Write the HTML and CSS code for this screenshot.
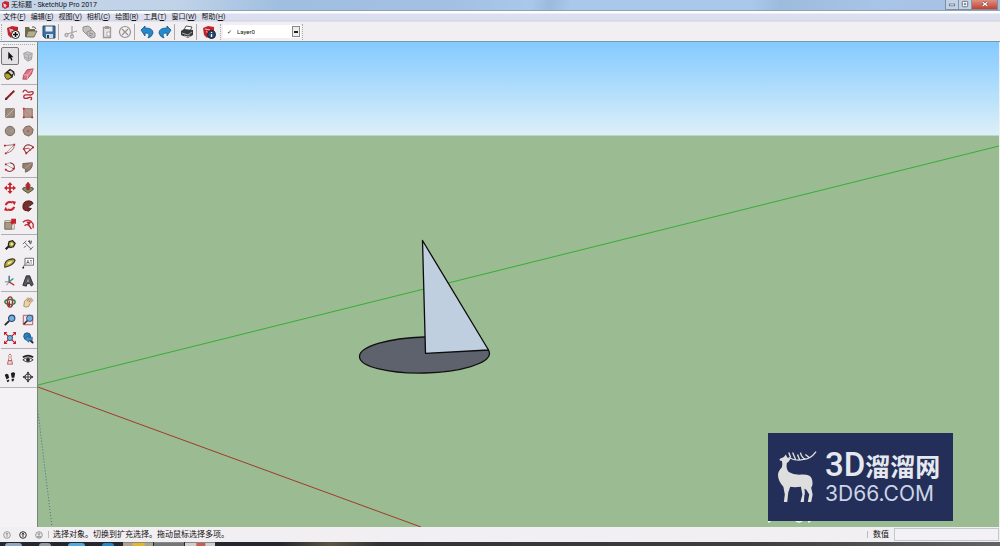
FILE: index.html
```html
<!DOCTYPE html>
<html lang="zh-CN">
<head>
<meta charset="utf-8">
<title>无标题 - SketchUp Pro 2017</title>
<link rel="stylesheet" href="styles.css">
</head>
<body>
<header class="titlebar">
  <svg class="app-icon" viewBox="0 0 8 8"><path d="M1 2 4 0l4 1v5L4 8 1 6z" fill="#c9252f"/><path d="M2 3l3 1v1L3 4.500v1L5 6" fill="none" stroke="#fff" stroke-width=".8"/></svg>
  <h1 class="title">无标题 - SketchUp Pro 2017</h1>
  <div class="window-buttons">
    <button class="win" aria-label="最小化"><svg viewBox="0 0 13 10"><rect x="3.500" y="4.500" width="6" height="2" fill="#fff" stroke="#56657c" stroke-width=".8"/></svg></button>
    <button class="win" aria-label="还原"><svg viewBox="0 0 13 10"><rect x="3.500" y="1.500" width="6" height="6" rx="1" fill="#fff" stroke="#56657c"/><path d="M5 4.500h3M6.500 3v3" stroke="#56657c"/></svg></button>
    <button class="win close" aria-label="关闭"><svg viewBox="0 0 13 10"><path d="M4 2.500l5 4M9 2.500l-5 4" stroke="#7d2c25" stroke-width="2.600"/><path d="M4 2.500l5 4M9 2.500l-5 4" stroke="#fff" stroke-width="1.500"/></svg></button>
  </div>
</header>

<nav class="menubar">
  <button>文件(<u>F</u>)</button><button>编辑(<u>E</u>)</button><button>视图(<u>V</u>)</button><button>相机(<u>C</u>)</button><button>绘图(<u>R</u>)</button><button>工具(<u>T</u>)</button><button>窗口(<u>W</u>)</button><button>帮助(<u>H</u>)</button>
</nav>

<div class="toolbar">
  <span class="grip"></span>
  <button class="tool" aria-label="新建"><svg viewBox="0 0 14 14"><path d="M1 3l5-2 6 1v3L5 13 2 10z" fill="#c6202c"/><path d="M3 4l4 1v1L4 5.500v1L7 8" stroke="#f5c9c9" fill="none"/><circle cx="9.500" cy="9.500" r="4" fill="#fff" stroke="#222"/><path d="M7 9.500h5M9.500 7v5" stroke="#111" stroke-width="1.500"/></svg></button>
  <button class="tool" aria-label="打开"><svg viewBox="0 0 14 14"><path d="M1 2h4l1 2h5v3H4l-2 5H1z" fill="#706a4e"/><path d="M4 6h9l-3 6H2z" fill="#b3ae8e" stroke="#5e5a42" stroke-width=".8"/><path d="M8 2q3-1 4 2" stroke="#555" fill="none"/></svg></button>
  <button class="tool" aria-label="保存"><svg viewBox="0 0 14 14"><path d="M1 1h12v12H3l-2-2z" fill="#3a6f9f" stroke="#2a4c6c"/><rect x="3.500" y="1.500" width="7" height="5" fill="#e9eff5"/><rect x="4" y="9" width="7" height="4" fill="#cdd6df"/><rect x="5" y="10" width="2" height="3" fill="#27425c"/></svg></button>
  <span class="sep"></span>
  <button class="tool" aria-label="剪切"><svg viewBox="0 0 14 14" fill="none" stroke="#a9a5a5" stroke-width="1.300"><path d="M8 1v9M13 6l-10 3"/><circle cx="2.500" cy="10" r="1.500"/><circle cx="8" cy="11.500" r="1.500"/></svg></button>
  <button class="tool" aria-label="复制"><svg viewBox="0 0 14 14" fill="#c3bfbf" stroke="#928e8e"><path d="M1 2l5-1 3 2v5l-5 1-3-3z"/><path d="M5 7l5-2 3 3v4l-4 1-4-3z"/><path d="M7 8l4 1M7 10l3 1" /></svg></button>
  <button class="tool" aria-label="粘贴"><svg viewBox="0 0 14 14"><path d="M3.500 2.500h7v10h-7z" fill="#e9e5e5" stroke="#9d9999" stroke-width="1.300"/><path d="M5 1h4v3H5z" fill="#9d9999"/><path d="M7 7h3v4H7z" fill="#fff" stroke="#aaa"/></svg></button>
  <button class="tool" aria-label="删除"><svg viewBox="0 0 14 14" fill="none" stroke="#959191" stroke-width="1.200"><circle cx="7" cy="7" r="5.500"/><path d="M4 4l6 6M10 4l-6 6"/></svg></button>
  <span class="sep"></span>
  <button class="tool" aria-label="撤销"><svg viewBox="0 0 14 14"><path d="M1 5l4-4v2q8 0 8 5-1 4-5 5 3-5-3-5v3z" fill="#2489cf" stroke="#15547f" stroke-width=".8"/></svg></button>
  <button class="tool" aria-label="重做"><svg viewBox="0 0 14 14"><path d="M13 5L9 1v2Q1 3 1 8q1 4 5 5-3-5 3-5v3z" fill="#2489cf" stroke="#15547f" stroke-width=".8"/></svg></button>
  <span class="sep"></span>
  <button class="tool" aria-label="打印"><svg viewBox="0 0 14 14"><path d="M4 5l2-4 6 1-2 4z" fill="#fff" stroke="#555"/><path d="M1 6l3-2 9 1v5l-5 3-7-3z" fill="#35393b"/><path d="M2 8l6 2 4-3" stroke="#a9adaf" fill="none"/><path d="M4 11l4 1 2-1" stroke="#ddd"/></svg></button>
  <span class="sep"></span>
  <button class="tool" aria-label="模型信息"><svg viewBox="0 0 14 14"><path d="M1 3l5-2 6 1v4L5 13 2 10z" fill="#c6202c"/><path d="M3 4l5 1M4 6.500l2 1" stroke="#f5c9c9"/><circle cx="9.500" cy="9.500" r="4" fill="#244b78" stroke="#222"/><path d="M9.500 9v3M9.500 7v1" stroke="#fff" stroke-width="1.300"/></svg></button>
  <span class="grip wide"></span>
  <label class="layer"><span class="check">✓</span><select class="layer-select" aria-label="图层"><option>Layer0</option></select><span class="arrow"></span></label>
  <span class="grip end"></span>
</div>

<main class="workspace">
  <aside class="palette">
    <div class="tools-panel">
    <span class="palette-grip"></span>
    <div class="group">
      <button class="tool active" aria-label="选择"><svg viewBox="0 0 14 14"><path d="M5 2v9l2-2 1.500 3.500 1.500-.7L8.500 8.500H11z" fill="#111"/></svg></button>
      <button class="tool" aria-label="制作组件"><svg viewBox="0 0 14 14"><path d="M2 4l4-2 6 2-1 7-4 2-4-3z" fill="#c9c8c8" stroke="#9b9a9a"/><path d="M2 4l6 2 4-2M8 6l-1 7M3 8l5 2 4-2" fill="none" stroke="#a3a2a2"/></svg></button>
      <button class="tool" aria-label="材质"><svg viewBox="0 0 14 14"><path d="M2 5l5-4 5 3 1 6-2-3-1 4-5 2-4-4z" fill="#25241c"/><path d="M1 6l4 0 4 4-3 3H3l-2-3z" fill="#b5a32b" stroke="#33301a"/><path d="M5 4l3-1 3 3-2 2z" fill="#d8d6c2"/></svg></button>
      <button class="tool" aria-label="擦除"><svg viewBox="0 0 14 14"><path d="M6 2l7-1-2 6-5 6H1l1-5z" fill="#dc7382" stroke="#a64856"/><path d="M2 8h5l5-6M7 8l-1 5" stroke="#f4b7bf" fill="none"/></svg></button>
    </div>
    <div class="group">
      <button class="tool" aria-label="直线"><svg viewBox="0 0 14 14"><path d="M2 12L12 2" stroke="#8d1e24" stroke-width="2.200"/><path d="M1 13l1-3 2 2z" fill="#222"/></svg></button>
      <button class="tool" aria-label="手绘线"><svg viewBox="0 0 14 14"><path d="M1 4C2 0 5 1 6 3s4 0 6 0 1 4-2 4-8-1-8 2 4 2 6 1 5 0 2 3" fill="none" stroke="#b32b38" stroke-width="1.500"/></svg></button>
      <button class="tool" aria-label="矩形"><svg viewBox="0 0 14 14"><path d="M2 2h10v10H2z" fill="#9c8c7e" stroke="#716257"/><path d="M2 12L12 2" stroke="#d7b6ad"/></svg></button>
      <button class="tool" aria-label="旋转矩形"><svg viewBox="0 0 14 14"><path d="M2 2h10v10H2z" fill="#b59a8d" stroke="#85685d"/><path d="M2 2v10M2 3l9 9" stroke="#c37b78"/><path d="M1 1h2v2H1zM1 11h2v2H1zM11 11h2v2h-2z" fill="#c0262d"/></svg></button>
      <button class="tool" aria-label="圆"><svg viewBox="0 0 14 14"><circle cx="7" cy="7" r="5.500" fill="#9b9081" stroke="#6e6255"/><path d="M7 7h4" stroke="#c5a398"/></svg></button>
      <button class="tool" aria-label="多边形"><svg viewBox="0 0 14 14"><path d="M4 2l5-1 4 4-1 5-4 3-5-2-2-5z" fill="#a38e82" stroke="#775f54"/><path d="M7 7l4-3" stroke="#c3796f"/><circle cx="7" cy="7" r="1" fill="#b33"/></svg></button>
      <button class="tool" aria-label="圆弧"><svg viewBox="0 0 14 14" fill="none"><path d="M1 3l11-1Q12 10 2 12" stroke="#a5555a"/><path d="M2 12L12 2" stroke="#999"/><path d="M0 2h2v2H0zM11 1h2v2h-2zM1 11h2v2H1z" fill="#bd222c"/></svg></button>
      <button class="tool" aria-label="两点圆弧"><svg viewBox="0 0 14 14" fill="none"><path d="M2 7q1-5 6-5 4 1 5 3L5 12z" stroke="#86343a" stroke-width="1.200"/><path d="M2 7l6-1 2 3" stroke="#b33"/><path d="M1 6h2v2H1zM4 11h2v2H4zM12 4h2v2h-2z" fill="#bd222c"/></svg></button>
      <button class="tool" aria-label="三点圆弧"><svg viewBox="0 0 14 14" fill="none"><path d="M7 2q6 1 5 7-5 6-10 1" stroke="#8e3137" stroke-width="1.200"/><path d="M2 4l9 5M2 4l5-2" stroke="#999"/><path d="M1 3h2v2H1zM10 8h2v2h-2zM1 9h2v2H1z" fill="#bd222c"/></svg></button>
      <button class="tool" aria-label="扇形"><svg viewBox="0 0 14 14"><path d="M1 3l11-1q1 8-8 11V9L1 8z" fill="#93806f" stroke="#6d594e"/><path d="M3 9l9-7" stroke="#c5a398"/></svg></button>
    </div>
    <div class="group">
      <button class="tool" aria-label="移动"><svg viewBox="0 0 14 14" fill="#c7222b"><path d="M7 0l3 3.500H8V6h2.500V4L14 7l-3.500 3V8H8v2.500h2L7 14l-3-3.500h2V8H3.500v2L0 7l3.500-3v2H6V3.500H4z"/></svg></button>
      <button class="tool" aria-label="推拉"><svg viewBox="0 0 14 14"><path d="M1 7l6-2 6 2v2l-6 4-6-4z" fill="#8d8a68" stroke="#51462f"/><path d="M7 0l3 4H8.500v5h-3V4H4z" fill="#bf222a" stroke="#781619" stroke-width=".5"/></svg></button>
      <button class="tool" aria-label="旋转"><svg viewBox="0 0 14 14"><path d="M2 6q2-5 8-3M12 8q-2 5-8 3" fill="none" stroke="#c7222b" stroke-width="2.300"/><path d="M9 1l5 1-2 4zM5 13l-5-1 2-4z" fill="#c7222b"/></svg></button>
      <button class="tool" aria-label="路径跟随"><svg viewBox="0 0 14 14"><path d="M1 8q0-7 7-7 4 0 5 3L9 7Q7 6 7 9l4 1-3 3-5-1q-2-1-2-4z" fill="#8b2228" stroke="#3c1b18"/><path d="M5 10Q4 5 12 4" fill="none" stroke="#55483a" stroke-width="1.500"/></svg></button>
      <button class="tool" aria-label="缩放"><svg viewBox="0 0 14 14"><path d="M1 3h11v10H1z" fill="#eee" stroke="#9a9187"/><path d="M1 5h8v8H1z" fill="#a69b89" stroke="#73695a"/><path d="M8 1h6v6l-2-1-2 2-3-3 2-2z" fill="#c7222b"/></svg></button>
      <button class="tool" aria-label="偏移"><svg viewBox="0 0 14 14"><path d="M1 5q7-6 12 2v5M3 9q4-4 8 4" fill="none" stroke="#bd222c" stroke-width="1.500"/><path d="M5 4l6 0-3 5z" fill="#bd222c"/></svg></button>
    </div>
    <div class="group">
      <button class="tool" aria-label="卷尺"><svg viewBox="0 0 14 14"><path d="M2 12l5-5" stroke="#222" stroke-width="2.500"/><path d="M6 3l4-1 3 3-2 4-4 1-2-3z" fill="#b8ab36" stroke="#26241a" stroke-width="1.400"/><circle cx="9" cy="6" r="1.300" fill="#eee"/></svg></button>
      <button class="tool" aria-label="尺寸"><svg viewBox="0 0 14 14" fill="none" stroke="#555"><path d="M3 4l8 8M1 6l4-4M9 13l4-4M2 10l3-2"/><path d="M7 3l2-1v3M11 2l-1 4" stroke="#222"/></svg></button>
      <button class="tool" aria-label="量角器"><svg viewBox="0 0 14 14"><path d="M1 12Q0 5 6 3q6-2 7 1-2 6-12 8z" fill="#b7a739" stroke="#343018" stroke-width="1.200"/><path d="M4 9q0-4 6-4-2 3-6 4z" fill="#f0edda"/></svg></button>
      <button class="tool" aria-label="文字"><svg viewBox="0 0 14 14"><path d="M3.500 1.500h10v8h-10zM3 9l-2 4" fill="#fff" stroke="#555"/><text x="5" y="8" class="glyph">A1</text><circle cx="1.500" cy="12.500" r="1" fill="#222"/></svg></button>
      <button class="tool" aria-label="轴"><svg viewBox="0 0 14 14" fill="none" stroke-width="1.500"><path d="M6 8V1" stroke="#285f9c"/><path d="M6 8l5-4" stroke="#38915c"/><path d="M6 8l6 4" stroke="#b52e34"/><path d="M6 8H1M6 8l-3 4" stroke="#68717a" stroke-width="1"/></svg></button>
      <button class="tool" aria-label="三维文字"><svg viewBox="0 0 14 14"><path d="M5 1h4l4 10-2 2-2-3H6l-1 3-4-1z" fill="#56575a" stroke="#232426"/><path d="M7 4l1 4H6z" fill="#c3c4c7"/></svg></button>
    </div>
    <div class="group">
      <button class="tool" aria-label="环绕观察"><svg viewBox="0 0 14 14" fill="none"><ellipse cx="7" cy="7" rx="3" ry="6" stroke="#a6282d" stroke-width="1.700"/><ellipse cx="7" cy="7" rx="6" ry="3" stroke="#347645" stroke-width="1.700"/><path d="M5 13V8l2-3v7" fill="#a6282d"/></svg></button>
      <button class="tool" aria-label="平移"><svg viewBox="0 0 14 14"><path d="M2 12l1-6 4-4 1 1-2 3 4-4 1 1-3 4 4-3 1 1-4 4-1 3-3 1z" fill="#eed2a5" stroke="#907552" stroke-width=".8"/></svg></button>
      <button class="tool" aria-label="缩放视图"><svg viewBox="0 0 14 14"><path d="M1 13l5-5" stroke="#292929" stroke-width="2.200"/><circle cx="9" cy="5" r="3.700" fill="#75aee0" stroke="#294768" stroke-width="1.300"/></svg></button>
      <button class="tool" aria-label="缩放窗口"><svg viewBox="0 0 14 14"><path d="M1.500 1.500h11v11h-11z" fill="#f3e3e5" stroke="#b8404a"/><path d="M2 12l5-5" stroke="#292929" stroke-width="1.800"/><circle cx="9" cy="5" r="3.700" fill="#75aee0" stroke="#294768"/></svg></button>
      <button class="tool" aria-label="充满视窗"><svg viewBox="0 0 14 14"><path d="M1 1l12 12M13 1L1 13" stroke="#bd222c" stroke-width="1.500"/><path d="M0 0h4L0 4zM14 0v4l-4-4zM0 14v-4l4 4zM14 14h-4l4-4z" fill="#bd222c"/><circle cx="7" cy="7" r="3" fill="#75aee0" stroke="#294768"/></svg></button>
      <button class="tool" aria-label="上一视图"><svg viewBox="0 0 14 14"><path d="M8 8l5 5" stroke="#292929" stroke-width="2.200"/><circle cx="6" cy="5" r="4" fill="#3380bf" stroke="#1f4d77"/><path d="M3 8l5-4v2h4v4H8v2z" fill="#3b8dd0" stroke="#1f4d77" stroke-width=".7"/></svg></button>
    </div>
    <div class="group">
      <button class="tool" aria-label="定位相机"><svg viewBox="0 0 14 14"><path d="M7 1l1.500 2L8 5l1 4H5l1-4-.5-2z" fill="#fff" stroke="#9c4c50" stroke-width=".8"/><path d="M4 13l1-4h4l1 4z" fill="#f0d8d9" stroke="#a63137" stroke-width=".8"/></svg></button>
      <button class="tool" aria-label="绕轴旋转"><svg viewBox="0 0 14 14"><path d="M1 5q6-4 12 0" fill="none" stroke="#222" stroke-width="2"/><path d="M1 8q6-5 12 0-6 5-12 0z" fill="#eee" stroke="#222"/><circle cx="7" cy="8" r="2.200" fill="#222"/></svg></button>
      <button class="tool" aria-label="漫游"><svg viewBox="0 0 14 14" fill="#1d1d1f"><path d="M1 5q1-3 4-1l1 4-3 2zM3 11l3-1 0 2-2 1zM8 3q3-3 5 0L12 8H9zM9 9h3l-1 3H9z"/></svg></button>
      <button class="tool" aria-label="剖切面"><svg viewBox="0 0 14 14" fill="none" stroke="#26272a"><circle cx="7" cy="7" r="3.500"/><path d="M7 1v12M1 7h12"/><path d="M5 3h4L7 1zM5 11h4l-2 2zM3 5v4L1 7zM11 5v4l2-2z" fill="#26272a" stroke="none"/></svg></button>
    </div>
    </div>
  </aside>
  <section class="viewport">
    <svg class="scene" viewBox="38 42 961 485" preserveAspectRatio="xMinYMin slice">
      <defs><linearGradient id="sky" x1="0" y1="0" x2="0" y2="1"><stop offset="0" stop-color="#83caff"/><stop offset="1" stop-color="#def0f8"/></linearGradient></defs>
      <rect x="38" y="42" width="961" height="94" fill="url(#sky)"/>
      <rect x="38" y="135.500" width="961" height="392" fill="#9bbb92"/>
      <path d="M38 385L999 146" stroke="#35ae34"/>
      <path d="M38 387L421 527" stroke="#a13a29"/>
      <path d="M35 387L52 527" stroke="#4a6a91" stroke-dasharray="1 2"/>
      <ellipse cx="424.500" cy="355" rx="65" ry="18" transform="rotate(-1.500 424.500 355)" fill="#5d626c" stroke="#111" stroke-width="1.300"/>
      <path d="M422.500 240.500L488.500 350 425.500 353.300z" fill="#c0cfdf" stroke="#0c0c0c" stroke-width="1.300" stroke-linejoin="round"/>
      <path d="M768 522q2 0 3-2M796 521q3 2 6 0M808 522q2 0 3-2" fill="none" stroke="#fff" stroke-width="1.500"/>
    </svg>
    <div class="brand">
      <svg class="deer" viewBox="0 0 42 54"><path d="M1.500 8.500L6 6.500 8 4l1.500 3L13 8l-2 3-2 2q-1 6 2 9 5 3 13 2.500 9-.5 10.500 4Q36.500 34 34 38l1.500 7L34 52.500h-3.500L32 45l-3-5-2-1q1 5 0 7l-.5 6.500H23L25 45l-1.500-8Q17 38 12.500 37L10.500 43 9.500 52.500H6L7 45 5.500 37Q0 31 0 25q0-4 4-8 1-3 0-6.500L2 10z" fill="#dededf"/><path d="M11 7q7 4 15 2 7 0 13-8M13 7l-2-5M18 9l-3-7M22 9L20 4M28 9q-4-2-5-7M32 7l-4-3" fill="none" stroke="#dededf" stroke-width="1.400"/></svg>
      <div class="brand-text"><div class="brand-name"><span class="brand-3d">3D</span>溜溜网</div><div class="brand-url">3D66.COM</div></div>
    </div>
  </section>
</main>

<footer class="statusbar">
  <button class="status-icon faint" aria-label="地理位置"><svg viewBox="0 0 8 8"><circle cx="4" cy="4" r="3.300"/><path d="M4 2v4M3 3.500L4 2l1 1.500"/></svg></button>
  <button class="status-icon" aria-label="归属"><svg viewBox="0 0 8 8"><circle cx="4" cy="4" r="3.300"/><path d="M4 2v4M3 3.500L4 2l1 1.500"/></svg></button>
  <button class="status-icon faint" aria-label="登录"><svg viewBox="0 0 8 8"><circle cx="4" cy="4" r="3.300"/><circle cx="4" cy="3" r="1"/><path d="M2 6q2-2 4 0z"/></svg></button>
  <span class="status-sep"></span>
  <p class="hint">选择对象。切换到扩充选择。拖动鼠标选择多项。</p>
  <span class="status-sep"></span>
  <label class="measure">数值<input class="measure-box" type="text"></label>
</footer>
<div class="taskbar">
  <span class="task orb"></span><span class="task gray"></span><span class="task sky"></span><span class="task blue"></span>
  <span class="task-tabs"><span class="tab yellow"></span><span class="tab dark"></span><span class="tab red"></span></span>
</div>
</body>
</html>
```

FILE: styles.css
```css
* { box-sizing: border-box; }
body {
  margin: 0;
  height: 100vh;
  display: flex;
  flex-direction: column;
  overflow: hidden;
  background: #f1eff1;
  color: #111;
  font: 7px/10px Roboto, "Noto Sans CJK SC", sans-serif;
}
button { margin: 0; padding: 0; border: 0; background: none; color: inherit; font: inherit; }
svg { display: block; }

.titlebar {
  display: flex;
  align-items: center;
  height: 11px;
  padding-left: 1px;
  border-bottom: 1px solid #8ca4b8;
  background: linear-gradient(100deg, #c6d6ea 0%, #c0d2e8 18%, #a0bee0 28%, #a3c0e4 45%, #a9c8ec 53%, #9bbade 55%, #a9c8ec 57%, #a9c8ec 75%, #9dbbdb 78%, #a8c4e8 88%, #a8c0e0 100%);
}
.app-icon { width: 8px; height: 8px; }
.title { margin: 0 auto 0 2px; font-size: 7px; font-weight: 400; white-space: nowrap; }
.window-buttons { display: flex; height: 10px; margin-right: 2px; border: 1px solid #7f8da4; border-top: 0; }
.win { width: 13px; background: #c4d2e6; border-right: 1px solid #8494ab; }
.win svg { width: 12px; height: 9px; margin: 0 auto; }
.win.close { width: 25px; border: 0; background: linear-gradient(#dc9184, #c4422d); }

.menubar {
  display: flex;
  gap: 5px;
  height: 11px;
  padding: 0 3px;
  background: linear-gradient(#fff 0 2px, #dcdff0 3px 9px, #cfd3df 10px, #f1eff1);
  white-space: nowrap;
}
.menubar u { text-decoration-thickness: 1px; text-underline-offset: 1px; }

.toolbar {
  display: flex;
  align-items: center;
  height: 20px;
  border-bottom: 1px solid #7a98ab;
}
.grip { width: 2px; height: 16px; margin: 0 1px; border-left: 1px dotted #aaa; }
.grip.wide { margin-left: 2px; }
.sep { width: 4px; height: 16px; border-left: 1px solid #aba8a9; border-right: 2px solid #f1eff1; }
.tool { display: grid; place-items: center; width: 18px; height: 18px; }
.tool svg { width: 14px; height: 14px; }
.group .tool svg { width: 12px; height: 12px; }
.group .tool.active { border: 1px solid #777; border-radius: 2px; background: #e3e1e4; }
.glyph { font: 6px "Open Sans", sans-serif; }
.layer { display: flex; align-items: center; height: 13px; width: 78px; padding: 0 1px 0 4px; background: #fff; }
.check { width: 8px; font: 6px/10px "DejaVu Sans", sans-serif; }
.layer-select { flex: 1; min-width: 0; appearance: none; border: 0; padding: 0 2px; background: #fff; color: #111; font: 6px/10px Roboto, sans-serif; }
.arrow { width: 8px; height: 11px; border: 1px solid #888; background: linear-gradient(#222, #222) center / 4px 2px no-repeat #eee; }

.workspace { flex: 1; min-height: 0; display: flex; padding-right: 1px; }
.palette { width: 38px; border-right: 1px solid #77847c; background: #f4f2f4; }
.tools-panel { padding: 1px 0 1px 1px; border-bottom: 1px solid #b8b6b8; background: #f1eff1; }
.palette-grip { display: block; height: 2px; margin: 0 2px 2px; border-bottom: 1px dotted #aaa; }
.group { display: grid; grid-template-columns: 18px 18px; }
.group + .group { margin-top: 1px; padding-top: 1px; border-top: 1px solid #b0aeb0; }

.viewport { position: relative; flex: 1; min-width: 0; overflow: hidden; background: #9bbb92; }
.scene { width: 100%; height: 100%; }
.brand {
  position: absolute;
  right: 46px;
  bottom: 6px;
  display: flex;
  align-items: center;
  gap: 6px;
  height: 88px;
  width: 185px;
  padding: 0 10px;
  background: #232f58;
  color: #e6e8ef;
}
.deer { width: 41px; height: 54px; }
.brand-text { white-space: nowrap; }
.brand-name { display: flex; align-items: baseline; height: 30px; font: 700 25px/30px "Noto Sans CJK SC", sans-serif; }
.brand-3d { font: 500 33px/30px Roboto, sans-serif; }
.brand-url { margin-top: 3px; font: 400 21px/22px Inter, sans-serif; color: #cdd4e6; }

.statusbar { display: flex; align-items: center; height: 15px; padding: 0 1px 0 3px; background: #f1eff1; }
.status-icon { width: 8px; margin-right: 8px; }
.status-icon svg { width: 8px; height: 8px; fill: none; stroke: #333; }
.status-icon.faint svg { stroke: #999; }
.status-icon:nth-of-type(3) { margin-right: 5px; }
.status-sep { height: 7px; border-left: 1px solid #bbb; }
.hint { margin: 0 auto 0 4px; font-size: 8px; line-height: 12px; white-space: nowrap; }
.measure { display: flex; align-items: center; gap: 5px; padding-left: 5px; font-size: 8px; }
.measure-box { width: 105px; height: 13px; padding: 0 2px; border: 1px solid #c3c8d0; background: #f3f1f3; font: inherit; }

.taskbar {
  display: flex;
  height: 4px;
  padding-left: 5px;
  background: linear-gradient(90deg, #25272e 0 28%, #5a5442 33%, #303236 38%, #3d3e40 75%, #646464 100%);
}
.task { width: 17px; border-radius: 4px 4px 0 0; margin-top: 1px; margin-right: 17px; }
.orb { background: #90a7bd; }
.gray { background: #8f9ba7; width: 12px; }
.sky { background: #54a9e1; }
.blue { background: #2587c7; width: 12px; margin-right: 9px; }
.task-tabs { display: flex; gap: 1px; }
.tab { width: 30px; border-top: 1px solid #888; }
.yellow { background: linear-gradient(90deg, #a9a491 30%, #e1b829 35% 70%, #a9a491 75%); }
.dark { background: #74777a; }
.red { background: linear-gradient(90deg, #cfcccd 35%, #c85b55 40% 65%, #cfcccd 70%); }
```
